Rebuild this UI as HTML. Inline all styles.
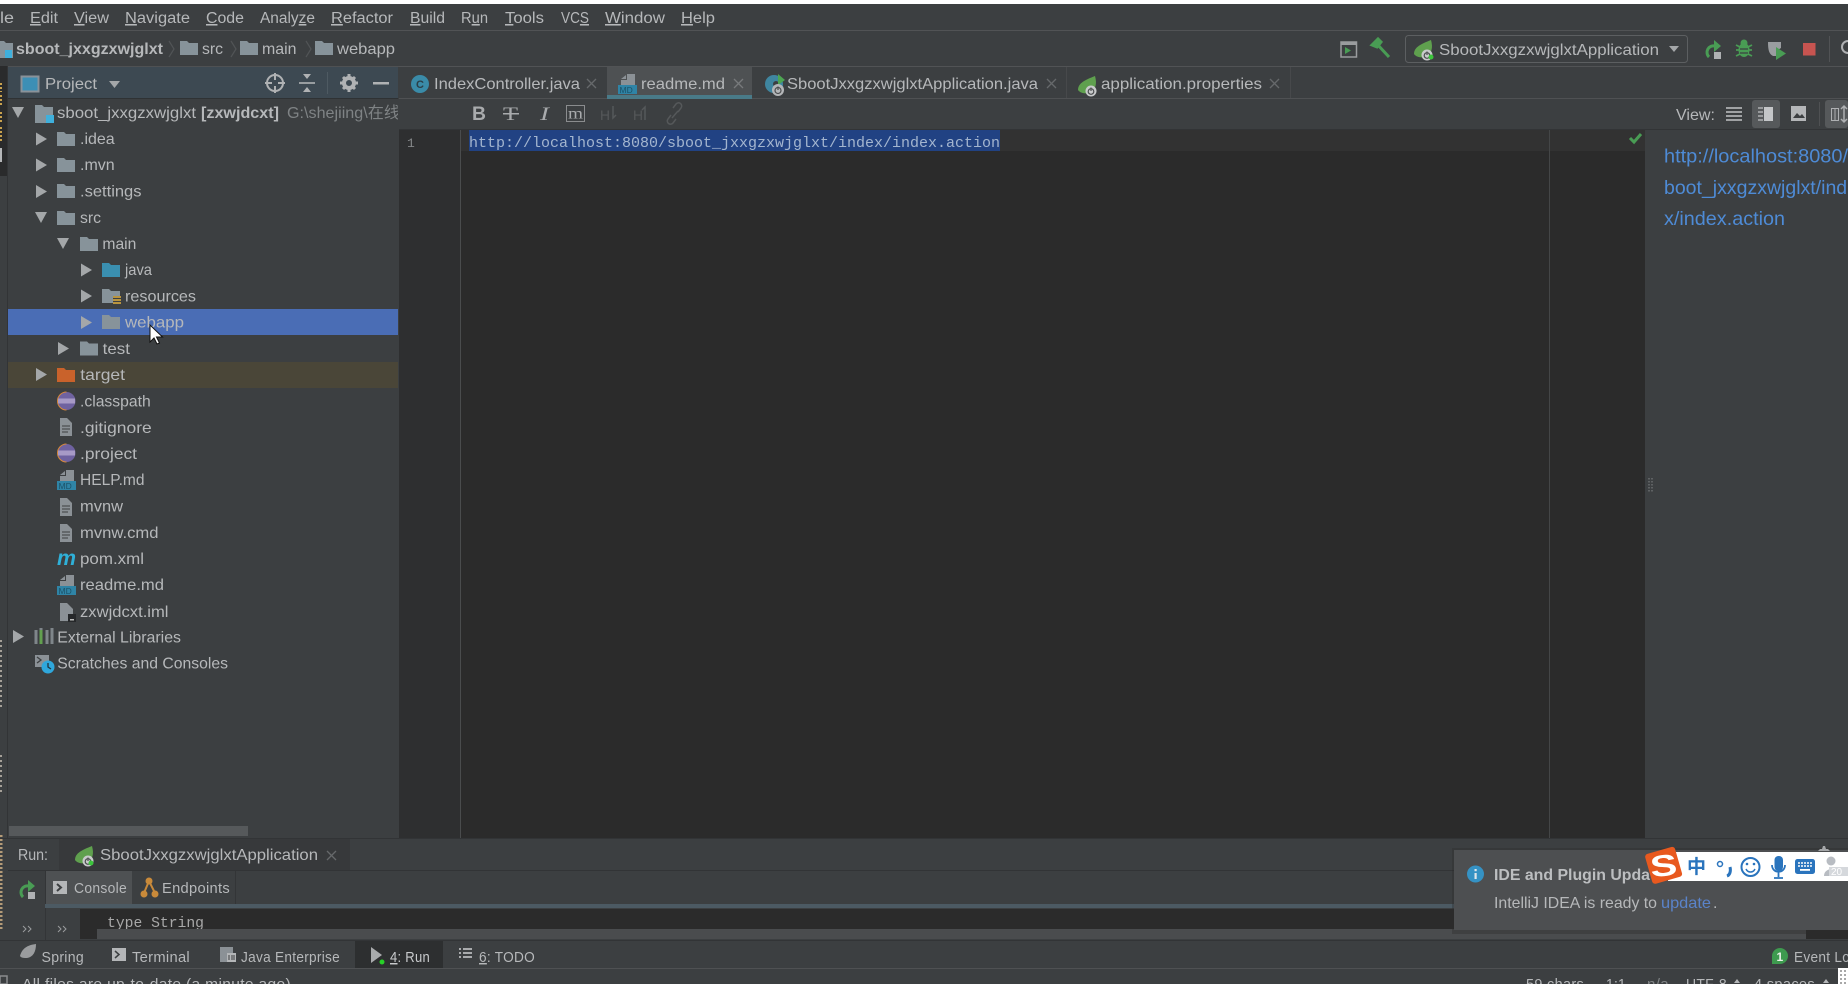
<!DOCTYPE html>
<html><head><meta charset="utf-8"><title>IDE</title>
<style>
html,body{margin:0;padding:0;background:#3c3f41;width:1848px;height:984px;overflow:hidden}
svg{display:block;filter:blur(.35px)}
text{font-family:"Liberation Sans","Noto Sans CJK SC",sans-serif;fill:#b6b8ba;font-size:16px;white-space:pre}
.m{font-size:15.5px}
.s{font-size:14.5px;letter-spacing:.3px}
.mono{font-family:"Liberation Mono",monospace}
.g{fill:#7f8385}
.u{text-decoration:underline}
</style></head><body>
<svg width="1848" height="984" viewBox="0 0 1848 984" xmlns="http://www.w3.org/2000/svg">
<defs>
<path id="fo" d="M0 0h7l2 2h9v12H0z"/>
<path id="ar" d="M0 0l11 6.5L0 13z" fill="#a4a7a9"/>
<path id="ad" d="M0 0h12L6 11z" fill="#a4a7a9"/>
<g id="md"><path d="M9 0h8v11H3V6h6z" fill="#8b9196"/><path d="M3 5l5-4v4z" fill="#8b9196"/><rect x="0" y="11" width="19" height="9" fill="#2f84a6"/><text x="1.500" y="19" style="font-size:8.500px;fill:#1d5268">MD</text></g>
<g id="fl"><path d="M0 0h7l5 5v13H0z" fill="#8b9196"/><path d="M2 8h8M2 11h8M2 14h6" stroke="#4d5052" stroke-width="1.200"/></g>
<g id="ec"><circle cx="9.500" cy="9" r="9" fill="#6f62a0"/><path d="M9.500 0A9 9 0 0 0 9.500 18" fill="none" stroke="#d8893a" stroke-width="1"/><rect x="1" y="6.500" width="17" height="5" fill="#a79ac6"/></g>
<g id="leaf"><path d="M0 14C0 7 7 4 17 0c2 7 1 13-4 16-4 2-10 2-13-2z" fill="#5fa04e"/><circle cx="13" cy="15" r="5.500" fill="#c8cacb"/><circle cx="13" cy="15.500" r="2.800" fill="none" stroke="#4c4e50" stroke-width="1.200"/><path d="M13 11.500v3.500" stroke="#4c4e50" stroke-width="1.200"/></g>
<g id="rerun"><path d="M11 6A6.500 6.500 0 0 0 5 17" fill="none" stroke="#499c54" stroke-width="3"/><path d="M10 0l7 6-7 6z" fill="#499c54"/><rect x="10" y="12" width="7" height="7" fill="#afb1b3"/></g>
</defs>

<!-- base -->
<rect width="1848" height="984" fill="#3c3f41"/>
<rect width="1848" height="4" fill="#fff"/>
<rect y="30" width="1848" height="1" fill="#515355"/>
<rect y="66" width="1848" height="1" fill="#4f5153"/>

<!-- menu -->
<g class="m">
<text class="m" x="0" y="23" textLength="14" lengthAdjust="spacingAndGlyphs">le</text>
<text class="m" x="30" y="23" textLength="28" lengthAdjust="spacingAndGlyphs"><tspan class="u">E</tspan>dit</text>
<text class="m" x="74" y="23" textLength="35" lengthAdjust="spacingAndGlyphs"><tspan class="u">V</tspan>iew</text>
<text class="m" x="125" y="23" textLength="65" lengthAdjust="spacingAndGlyphs"><tspan class="u">N</tspan>avigate</text>
<text class="m" x="206" y="23" textLength="38" lengthAdjust="spacingAndGlyphs"><tspan class="u">C</tspan>ode</text>
<text class="m" x="260" y="23" textLength="55" lengthAdjust="spacingAndGlyphs">Analy<tspan class="u">z</tspan>e</text>
<text class="m" x="331" y="23" textLength="62" lengthAdjust="spacingAndGlyphs"><tspan class="u">R</tspan>efactor</text>
<text class="m" x="410" y="23" textLength="35" lengthAdjust="spacingAndGlyphs"><tspan class="u">B</tspan>uild</text>
<text class="m" x="461" y="23" textLength="27" lengthAdjust="spacingAndGlyphs">R<tspan class="u">u</tspan>n</text>
<text class="m" x="505" y="23" textLength="39" lengthAdjust="spacingAndGlyphs"><tspan class="u">T</tspan>ools</text>
<text class="m" x="561" y="23" textLength="28" lengthAdjust="spacingAndGlyphs">VC<tspan class="u">S</tspan></text>
<text class="m" x="605" y="23" textLength="60" lengthAdjust="spacingAndGlyphs"><tspan class="u">W</tspan>indow</text>
<text class="m" x="681" y="23" textLength="34" lengthAdjust="spacingAndGlyphs"><tspan class="u">H</tspan>elp</text>
</g>

<!-- breadcrumb -->
<path d="M-3 41h7l2 2h7v15H-3z" fill="#87939a"/><rect x="5" y="50" width="7" height="8" fill="#3fb0dc"/>
<text x="16" y="54" style="font-weight:bold" textLength="147" lengthAdjust="spacingAndGlyphs">sboot_jxxgzxwjglxt</text>
<path d="M169 41l5 8-5 8M231 41l5 8-5 8M306 41l5 8-5 8" fill="none" stroke="#515456" stroke-width="1.200"/>
<use href="#fo" x="180" y="41" fill="#87939a"/><text x="202" y="54" textLength="21" lengthAdjust="spacingAndGlyphs">src</text>
<use href="#fo" x="240" y="41" fill="#87939a"/><text x="262" y="54" textLength="34.500" lengthAdjust="spacingAndGlyphs">main</text>
<use href="#fo" x="315" y="41" fill="#87939a"/><text x="337" y="54" textLength="58" lengthAdjust="spacingAndGlyphs">webapp</text>

<!-- toolbar right -->
<rect x="1341" y="42" width="15.500" height="15" fill="none" stroke="#9a9c9e" stroke-width="1.500"/><rect x="1341" y="42" width="15.500" height="3" fill="#9a9c9e"/><path d="M1345 47l6 3.500-6 3.500z" fill="#499c54"/>
<path d="M1372 45l6-6 3 3-4 5zM1377 44l12 13" fill="#499c54" stroke="#499c54" stroke-width="3"/>
<rect x="1405.500" y="35.500" width="282" height="27" rx="3" fill="#3c3f41" stroke="#5c5f61"/>
<use href="#leaf" x="1414" y="40"/><circle cx="1431" cy="57" r="2.500" fill="#3cc43c"/>
<text x="1439" y="55" textLength="220" lengthAdjust="spacingAndGlyphs">SbootJxxgzxwjglxtApplication</text>
<path d="M1669 46h10l-5 6z" fill="#a4a7a9"/>
<use href="#rerun" x="1704" y="40"/>
<g fill="#499c54"><ellipse cx="1744" cy="50" rx="5.500" ry="7"/><circle cx="1744" cy="43" r="3.500"/><path d="M1736 45l4 2M1752 45l-4 2M1736 50h4M1752 50h-4M1736 56l4-2M1752 56l-4-2" stroke="#499c54" stroke-width="1.800"/></g><path d="M1740 49h8M1740 53h8" stroke="#3c3f41" stroke-width="1.300"/>
<path d="M1768 42h13v6l-5 3v5h-3c-4-2-5-6-5-14z" fill="#9a9da0"/><path d="M1776 47l10 6.500-10 6.500z" fill="#499c54"/>
<rect x="1803" y="43" width="12.500" height="12.500" fill="#c75450"/>
<rect x="1829" y="36" width="1" height="26" fill="#515355"/>
<circle cx="1848" cy="47" r="6" fill="none" stroke="#aeb0b2" stroke-width="2"/>

<!-- strip left -->
<rect x="0" y="66" width="7" height="110" fill="#2a2b2c"/>
<rect x="7" y="66" width="1" height="772" fill="#323436"/>
<path d="M1 83v9M1 95v12M1 112v12M1 127v14" stroke="#c9a24e" stroke-width="2" stroke-dasharray="2 2"/>
<path d="M1 148v12" stroke="#b5b7b9" stroke-width="2"/><rect x="0" y="152" width="2" height="10" fill="#b5b7b9"/>
<path d="M1 640v70M1 755v40" stroke="#a5a098" stroke-width="2" stroke-dasharray="2 3"/>
<path d="M1 835v95" stroke="#b49b78" stroke-width="3" stroke-dasharray="2 2"/>

<!-- Project header -->
<rect x="8" y="67" width="390" height="31" fill="#3d4952"/>
<rect x="8" y="98" width="390" height="1" fill="#2f3234"/>
<rect x="21.500" y="76.500" width="17" height="15" fill="#3d8fb5" stroke="#8a9299" stroke-width="2"/>
<text x="45" y="89" textLength="52" lengthAdjust="spacingAndGlyphs">Project</text>
<path d="M109 81h11l-5.500 7z" fill="#a4a7a9"/>
<circle cx="275" cy="83" r="8" fill="none" stroke="#b0b2b4" stroke-width="2"/><path d="M275 73v7M275 86v7M265 83h7M278 83h7" stroke="#b0b2b4" stroke-width="2"/>
<path d="M299 83h16" stroke="#b0b2b4" stroke-width="1.600"/><path d="M303 74h8l-4 5zM303 92h8l-4-5z" fill="#b0b2b4"/>
<rect x="327" y="72" width="1" height="22" fill="#4e5a62"/>
<circle cx="349" cy="83" r="5" fill="none" stroke="#b0b2b4" stroke-width="4"/><path d="M349 74v3M349 89v3M340 83h3M355 83h3M343 77l2 2M353 87l2 2M343 89l2-2M353 79l2-2" stroke="#b0b2b4" stroke-width="3"/>
<rect x="373" y="82" width="16" height="2.500" fill="#b0b2b4"/>

<!-- tree rows -->
<rect x="8" y="309" width="390" height="26" fill="#4a6db5"/>
<rect x="8" y="362" width="390" height="26" fill="#4a4638"/>

<use href="#ad" x="12" y="107"/>
<path d="M35 105h7l2 2h9v16H35z" fill="#87939a"/><rect x="46" y="115" width="8" height="8" fill="#3fb0dc"/>
<text x="57" y="118" textLength="139" lengthAdjust="spacingAndGlyphs">sboot_jxxgzxwjglxt</text>
<text x="201" y="118" style="font-weight:bold" textLength="78" lengthAdjust="spacingAndGlyphs">[zxwjdcxt]</text>
<text x="287" y="118" class="g" textLength="113" lengthAdjust="spacingAndGlyphs">G:\shejiing\在线</text>
<rect x="398" y="98" width="2" height="30" fill="#3c3f41"/>

<use href="#ar" x="36" y="132.500"/><use href="#fo" x="57" y="132" fill="#87939a"/><text x="80" y="144" textLength="34.700" lengthAdjust="spacingAndGlyphs">.idea</text>
<use href="#ar" x="36" y="158.500"/><use href="#fo" x="57" y="158" fill="#87939a"/><text x="80" y="170.200" textLength="34.700" lengthAdjust="spacingAndGlyphs">.mvn</text>
<use href="#ar" x="36" y="185"/><use href="#fo" x="57" y="184" fill="#87939a"/><text x="80" y="196.700" textLength="61.500" lengthAdjust="spacingAndGlyphs">.settings</text>
<use href="#ad" x="35" y="212"/><use href="#fo" x="57" y="211" fill="#87939a"/><text x="80" y="222.900" textLength="21" lengthAdjust="spacingAndGlyphs">src</text>
<use href="#ad" x="57" y="238"/><use href="#fo" x="80" y="237" fill="#87939a"/><text x="102.400" y="249.100" textLength="34" lengthAdjust="spacingAndGlyphs">main</text>
<use href="#ar" x="81" y="263.500"/><use href="#fo" x="102" y="263" fill="#3a8fb0"/><text x="125" y="275" textLength="27" lengthAdjust="spacingAndGlyphs">java</text>
<use href="#ar" x="81" y="289.500"/><use href="#fo" x="102" y="289" fill="#87939a"/><rect x="113" y="296" width="8" height="9" fill="#3c3f41"/><path d="M113 297h8M113 300h8M113 303h8" stroke="#c9a13f" stroke-width="1.800"/><text x="125" y="301.500" textLength="71" lengthAdjust="spacingAndGlyphs">resources</text>
<use href="#ar" x="81" y="316"/><use href="#fo" x="102" y="315" fill="#87939a"/><text x="125" y="327.700" textLength="59" lengthAdjust="spacingAndGlyphs">webapp</text>
<use href="#ar" x="58" y="342"/><use href="#fo" x="80" y="341.500" fill="#87939a"/><text x="102.700" y="354" textLength="27.300" lengthAdjust="spacingAndGlyphs">test</text>
<use href="#ar" x="36" y="368"/><use href="#fo" x="57" y="368" fill="#c9622b"/><text x="80.300" y="380.200" textLength="44.700" lengthAdjust="spacingAndGlyphs">target</text>

<use href="#ec" x="57" y="392"/><text x="80" y="406.400" textLength="70.700" lengthAdjust="spacingAndGlyphs">.classpath</text>
<use href="#fl" x="60" y="418"/><text x="80" y="432.800" textLength="71.700" lengthAdjust="spacingAndGlyphs">.gitignore</text>
<use href="#ec" x="57" y="444"/><text x="80" y="458.800" textLength="57" lengthAdjust="spacingAndGlyphs">.project</text>
<use href="#md" x="57" y="470"/><text x="80" y="485" textLength="64.500" lengthAdjust="spacingAndGlyphs">HELP.md</text>
<use href="#fl" x="60" y="498"/><text x="80" y="511.700" textLength="43" lengthAdjust="spacingAndGlyphs">mvnw</text>
<use href="#fl" x="60" y="524"/><text x="80" y="537.900" textLength="78.500" lengthAdjust="spacingAndGlyphs">mvnw.cmd</text>
<text x="57" y="565" style="font-size:21px;font-style:italic;font-weight:bold;fill:#2fb0d8" textLength="19" lengthAdjust="spacingAndGlyphs">m</text><text x="80" y="564" textLength="64" lengthAdjust="spacingAndGlyphs">pom.xml</text>
<use href="#md" x="57" y="575"/><text x="80" y="589.800" textLength="84" lengthAdjust="spacingAndGlyphs">readme.md</text>
<path d="M60 603h7l6 6v12H60z" fill="#8b9196"/><rect x="68" y="614" width="8" height="8" fill="#26282a"/><rect x="70" y="619" width="4" height="1.500" fill="#bbb"/><text x="80" y="617" textLength="88.500" lengthAdjust="spacingAndGlyphs">zxwjdcxt.iml</text>
<use href="#ar" x="13" y="630"/>
<path d="M36 630v14M41 628v16M47 630v14M52 628v16" stroke="#7f868a" stroke-width="3"/><path d="M41 630v14" stroke="#62a04f" stroke-width="3"/>
<text x="57.300" y="642.400" textLength="123.700" lengthAdjust="spacingAndGlyphs">External Libraries</text>
<rect x="35" y="655" width="14" height="12" fill="#8b9196"/><path d="M37 657l4 3-4 3" fill="none" stroke="#3c3f41" stroke-width="1.300"/>
<circle cx="48" cy="667" r="6.500" fill="#2fa7dc"/><path d="M48 663v4l3 2" fill="none" stroke="#203540" stroke-width="1.300"/>
<text x="57.300" y="668.400" textLength="170.700" lengthAdjust="spacingAndGlyphs">Scratches and Consoles</text>

<rect x="9" y="826" width="239" height="10" fill="#56595b"/>

<!-- cursor -->
<path d="M150 325v17l4-4 3 6 2.500-1-3-6h6z" fill="#fff" stroke="#111" stroke-width="1"/>

<!-- tabs -->
<rect x="399" y="67" width="1449" height="31" fill="#3c3f41"/>
<rect x="399" y="98" width="1449" height="1" fill="#4f5153"/>
<rect x="399" y="66" width="1449" height="1" fill="#515355"/>
<circle cx="420" cy="84" r="9" fill="#3a8ba8"/><text x="416" y="88" style="font-size:11px;fill:#2b3f48;font-weight:bold">C</text>
<text x="434" y="89" textLength="146" lengthAdjust="spacingAndGlyphs">IndexController.java</text>
<path d="M587 79l9 9M596 79l-9 9" stroke="#66696b" stroke-width="1.300"/>
<rect x="607" y="67" width="145" height="31" fill="#4e5153"/>
<rect x="607" y="95" width="145" height="4" fill="#497a88"/>
<use href="#md" x="618" y="74"/>
<text x="641" y="89" textLength="84" lengthAdjust="spacingAndGlyphs">readme.md</text>
<path d="M734 79l9 9M743 79l-9 9" stroke="#777a7c" stroke-width="1.300"/>
<circle cx="774" cy="84" r="9" fill="#3f86a0"/><circle cx="776" cy="84" r="3" fill="#3c3f41"/><path d="M778 74l7 6-7 5z" fill="#4da552"/><circle cx="778" cy="90" r="6" fill="#b4b6b8"/><circle cx="778" cy="90.500" r="3" fill="none" stroke="#4c4e50" stroke-width="1.200"/><path d="M778 86.500v3.500" stroke="#4c4e50" stroke-width="1.200"/>
<text x="787" y="89" textLength="251" lengthAdjust="spacingAndGlyphs">SbootJxxgzxwjglxtApplication.java</text>
<path d="M1047 79l9 9M1056 79l-9 9" stroke="#66696b" stroke-width="1.300"/>
<rect x="1066" y="67" width="1" height="31" fill="#47494b"/>
<use href="#leaf" x="1078" y="76"/>
<text x="1101" y="89" textLength="161" lengthAdjust="spacingAndGlyphs">application.properties</text>
<path d="M1270 79l9 9M1279 79l-9 9" stroke="#66696b" stroke-width="1.300"/>
<rect x="1290" y="67" width="1" height="31" fill="#47494b"/>

<!-- editor toolbar -->
<rect x="399" y="129" width="1449" height="1" fill="#323436"/>
<text x="472" y="120" style="font-size:19px;font-weight:bold;fill:#a9abad" textLength="14" lengthAdjust="spacingAndGlyphs">B</text>
<text x="503" y="120" style="font-family:'Liberation Serif',serif;font-size:19px;fill:#a9abad" textLength="15" lengthAdjust="spacingAndGlyphs">T</text><rect x="503" y="113" width="16" height="1.500" fill="#a9abad"/>
<text x="540" y="120" style="font-family:'Liberation Serif',serif;font-style:italic;font-size:19px;fill:#a9abad" textLength="9" lengthAdjust="spacingAndGlyphs">I</text>
<rect x="566.500" y="105.500" width="18" height="16" fill="none" stroke="#8a8c8e"/><text x="568" y="118.500" style="font-family:'Liberation Serif',serif;font-size:16px;fill:#a9abad" textLength="15" lengthAdjust="spacingAndGlyphs">m</text>
<text x="600" y="120" style="font-size:14px;fill:#55585a" textLength="10" lengthAdjust="spacingAndGlyphs">H</text><path d="M613 106v12l3-3" fill="none" stroke="#55585a" stroke-width="1.500"/>
<text x="633" y="120" style="font-size:14px;fill:#55585a" textLength="10" lengthAdjust="spacingAndGlyphs">H</text><path d="M645 120v-13l-3 3" fill="none" stroke="#55585a" stroke-width="1.500"/>
<path d="M671 115l-3 4a3 3 0 0 0 5 4l3-4M678 112l3-4a3 3 0 0 0-5-4l-3 4M672 118l6-7" fill="none" stroke="#55585a" stroke-width="1.500"/>
<text x="1676" y="120" textLength="39" lengthAdjust="spacingAndGlyphs">View:</text>
<path d="M1726 108h16M1726 112h16M1726 116h16M1726 120h16" stroke="#aeb0b2" stroke-width="1.800"/>
<rect x="1752" y="100" width="28" height="28" rx="3" fill="#56595b"/>
<path d="M1758 108h5M1758 112h5M1758 116h5M1758 120h5" stroke="#aeb0b2" stroke-width="1.500"/><rect x="1764" y="107" width="9" height="14" fill="#c4c6c8"/>
<rect x="1791" y="106" width="15" height="15" fill="#b4b6b8"/><path d="M1793 118l4-5 3 3 2-2 3 4z" fill="#3c3f41"/>
<rect x="1819" y="102" width="1" height="24" fill="#4f5153"/>
<rect x="1825" y="100" width="23" height="28" rx="3" fill="#56595b"/>
<rect x="1831.500" y="108.500" width="7" height="12" fill="none" stroke="#aeb0b2"/><path d="M1835 108v12" stroke="#aeb0b2"/><path d="M1844 106v16M1841 109l3-3 3 3M1841 119l3 3 3-3" fill="none" stroke="#aeb0b2" stroke-width="1.500"/>

<!-- editor -->
<rect x="399" y="130" width="1246" height="708" fill="#2b2b2b"/>
<rect x="399" y="130" width="62" height="708" fill="#2e2f30"/>
<rect x="460" y="130" width="1" height="708" fill="#4a4c4d"/>
<rect x="461" y="130" width="1184" height="21" fill="#323232"/>
<rect x="469" y="130" width="531" height="21" fill="#214283"/>
<rect x="1549" y="130" width="1" height="708" fill="#444647"/>
<text class="mono" x="469" y="147" style="font-size:15px;fill:#a3b5cf" textLength="531" lengthAdjust="spacingAndGlyphs">http://localhost:8080/sboot_jxxgzxwjglxt/index/index.action</text>
<text class="mono" x="407" y="147" style="font-size:13px;fill:#858789">1</text>
<path d="M1630 138l4 4 7-8" fill="none" stroke="#499c54" stroke-width="3"/>

<!-- preview -->
<rect x="1645" y="130" width="203" height="708" fill="#3c3f41"/>
<text x="1664" y="162.500" style="font-size:19.500px;fill:#4e8bd6" textLength="194" lengthAdjust="spacingAndGlyphs">http://localhost:8080/s</text>
<text x="1664" y="194" style="font-size:19.500px;fill:#4e8bd6" textLength="194" lengthAdjust="spacingAndGlyphs">boot_jxxgzxwjglxt/inde</text>
<text x="1664" y="225" style="font-size:19.500px;fill:#4e8bd6" textLength="121" lengthAdjust="spacingAndGlyphs">x/index.action</text>
<path d="M1649 478v14M1652 478v14" stroke="#6a6d6f" stroke-width="1.500" stroke-dasharray="1.500 1.500"/>

<!-- run panel -->
<rect y="838" width="1848" height="1" fill="#323436"/>
<rect x="59" y="839" width="291" height="31" fill="#37393b"/>
<rect x="8" y="870" width="1840" height="1" fill="#323436"/>
<text x="18" y="860" textLength="30" lengthAdjust="spacingAndGlyphs">Run:</text>
<use href="#leaf" x="75" y="846"/><circle cx="91" cy="863" r="2.500" fill="#3cc43c"/>
<text x="100" y="860" textLength="218" lengthAdjust="spacingAndGlyphs">SbootJxxgzxwjglxtApplication</text>
<path d="M327 851l9 9M336 851l-9 9" stroke="#66696b" stroke-width="1.300"/>
<use href="#rerun" x="18" y="880"/>
<rect x="45" y="871" width="87" height="33" fill="#4e5153"/>
<rect x="45" y="871" width="1" height="70" fill="#333537"/>
<rect x="53" y="881" width="14" height="13" fill="#b4b6b8"/><path d="M57 884l4 3.500-4 3.500" fill="none" stroke="#3c3f41" stroke-width="2"/>
<text class="s" x="74" y="893" textLength="53" lengthAdjust="spacingAndGlyphs">Console</text>
<path d="M144 893l5-12 6 12" fill="none" stroke="#c98a3a" stroke-width="2"/><circle cx="149" cy="881" r="3.500" fill="#c98a3a"/><circle cx="144" cy="894" r="3.500" fill="#c98a3a"/><circle cx="155" cy="894" r="3.500" fill="#c98a3a"/>
<text class="s" x="162" y="893" textLength="68" lengthAdjust="spacingAndGlyphs">Endpoints</text>
<rect x="235" y="871" width="1" height="33" fill="#333537"/>
<rect x="45" y="904" width="1803" height="4" fill="#4c5a63"/>
<rect x="80" y="909" width="1768" height="30" fill="#2b2b2b"/>
<text class="mono" x="107" y="927" style="font-size:15px;fill:#a9a9a9" textLength="97" lengthAdjust="spacingAndGlyphs">type String</text>
<rect x="97" y="929" width="1709" height="10" fill="#4a4c4e"/>
<path d="M23 926l3 3-3 3M28 926l3 3-3 3M58 926l3 3-3 3M63 926l3 3-3 3" fill="none" stroke="#9a9c9e" stroke-width="1"/>

<!-- bottom tool bar -->
<rect y="940" width="1848" height="1" fill="#323436"/>
<rect x="355" y="941" width="88" height="27" fill="#2d2f30"/>
<rect y="968" width="1848" height="1" fill="#4f5153"/>
<path d="M20 956c2-8 8-11 16-12 0 8-3 13-9 14-3 0-6-0-7-2z" fill="#9a9c9e"/>
<text class="s" x="41.500" y="962" textLength="42.500" lengthAdjust="spacingAndGlyphs">Spring</text>
<rect x="112" y="948" width="14" height="13" fill="#b4b6b8"/><path d="M115 951l4 3.500-4 3.500" fill="none" stroke="#3c3f41" stroke-width="1.500"/>
<text class="s" x="132" y="962" textLength="58" lengthAdjust="spacingAndGlyphs">Terminal</text>
<rect x="220" y="947" width="13" height="15" fill="#8b9196"/><rect x="227" y="953" width="9" height="9" fill="#b4b6b8"/><path d="M229 955v5M232 955v5M234 955v5" stroke="#3c3f41" stroke-width="1"/>
<text class="s" x="241" y="962" textLength="99" lengthAdjust="spacingAndGlyphs">Java Enterprise</text>
<path d="M371 947l11 8-11 8z" fill="#a9abad"/><circle cx="382" cy="962" r="2.500" fill="#27d027"/>
<text class="s" x="390" y="962" textLength="40" lengthAdjust="spacingAndGlyphs" style="fill:#c9cbcd"><tspan class="u">4</tspan>: Run</text>
<path d="M459 949h2M459 953h2M459 957h2M463 949h9M463 953h9M463 957h9" stroke="#a9abad" stroke-width="2"/>
<text class="s" x="479" y="962" textLength="56" lengthAdjust="spacingAndGlyphs"><tspan class="u">6</tspan>: TODO</text>
<path d="M1772 956a8 8 0 1 1 8 8h-8z" fill="#3e9a4f"/><text x="1776.500" y="961" style="font-size:12px;font-weight:bold;fill:#e8f0e8">1</text>
<text class="s" x="1794" y="962" textLength="64" lengthAdjust="spacingAndGlyphs">Event Log</text>

<!-- status -->
<rect x="0" y="976" width="7" height="8" fill="none" stroke="#8a8c8e" stroke-width="1.500"/>
<text x="22" y="989" class="s" textLength="269" lengthAdjust="spacingAndGlyphs">All files are up-to-date (a minute ago)</text>
<text x="1526" y="989" class="s" textLength="58" lengthAdjust="spacingAndGlyphs">59 chars</text>
<text x="1606" y="989" class="s" textLength="20" lengthAdjust="spacingAndGlyphs">1:1</text>
<text x="1647" y="989" class="s g" textLength="22" lengthAdjust="spacingAndGlyphs">n/a</text>
<text x="1686" y="989" class="s" textLength="41" lengthAdjust="spacingAndGlyphs">UTF-8</text>
<path d="M1734 983l3-4 3 4z" fill="#b4b6b8"/>
<text x="1754" y="989" class="s" textLength="61" lengthAdjust="spacingAndGlyphs">4 spaces</text>
<path d="M1823 983l3-4 3 4z" fill="#b4b6b8"/>
<rect x="1838" y="968" width="10" height="16" fill="#fff"/>
<path d="M1841 970v14M1845 970v14" stroke="#a8a8a8" stroke-width="2" stroke-dasharray="2 2"/>

<!-- notification -->
<rect x="1452" y="848" width="396" height="86" fill="#2a2b2c" opacity=".35"/>
<rect x="1454" y="850" width="394" height="80" fill="#4d4f51"/>
<circle cx="1475.500" cy="874" r="8.500" fill="#3592c4"/><rect x="1474.500" y="873" width="2.200" height="6" fill="#e0e6ea"/><rect x="1474.500" y="869" width="2.200" height="2.200" fill="#e0e6ea"/>
<text x="1494" y="880" style="font-weight:bold;fill:#bcbec0" textLength="156" lengthAdjust="spacingAndGlyphs">IDE and Plugin Upda</text>
<text x="1494" y="908" textLength="163" lengthAdjust="spacingAndGlyphs">IntelliJ IDEA is ready to</text>
<text x="1661" y="908" style="fill:#5a83c9" textLength="50" lengthAdjust="spacingAndGlyphs">update</text>
<text x="1713" y="908">.</text>

<!-- IME bar -->
<path d="M1818 851h12l-2-2h-2l-1-3h-2l-1 3h-2z" fill="#a5a7a9"/>
<rect x="1668" y="852" width="180" height="29" fill="#fff"/>
<g transform="rotate(-16 1663 865)"><rect x="1648" y="850" width="31" height="31" rx="3" fill="#e8591f"/></g>
<text x="1650" y="876" transform="rotate(-6 1663 865)" style="font-size:30px;font-weight:bold;fill:#fff" textLength="27" lengthAdjust="spacingAndGlyphs">S</text>
<text x="1687" y="873" style="font-family:'Noto Sans CJK SC',sans-serif;font-size:19px;font-weight:bold;fill:#2a74bd">中</text>
<circle cx="1720" cy="864" r="2.500" fill="none" stroke="#2a74bd" stroke-width="1.500"/>
<path d="M1730 867c1 4 0 8-3 9" fill="none" stroke="#2a74bd" stroke-width="3"/>
<circle cx="1750.500" cy="867" r="9" fill="none" stroke="#2a74bd" stroke-width="2"/><circle cx="1747" cy="864" r="1.300" fill="#2a74bd"/><circle cx="1754" cy="864" r="1.300" fill="#2a74bd"/><path d="M1746 869c2 4 7 4 9 0" fill="none" stroke="#2a74bd" stroke-width="1.500"/>
<rect x="1774.500" y="856" width="8.500" height="15" rx="4" fill="#2a74bd"/><path d="M1772 865c0 9 13 9 13 0M1778.500 872v5M1774 878h9" fill="none" stroke="#2a74bd" stroke-width="1.800"/>
<rect x="1795" y="859" width="20" height="15" rx="2.500" fill="#2a74bd"/><path d="M1798 863h14M1798 866h14" stroke="#fff" stroke-width="1.500" stroke-dasharray="2 1"/><rect x="1800" y="869" width="10" height="1.800" fill="#fff"/>
<circle cx="1831" cy="861" r="4.500" fill="#b8bcc2"/><path d="M1824 876c0-9 14-9 14 0z" fill="#b8bcc2"/><rect x="1829" y="867" width="19" height="9" fill="#d5d8dc"/><text x="1831" y="875" style="font-size:10px;fill:#fff">20</text>
</svg>
</body></html>
